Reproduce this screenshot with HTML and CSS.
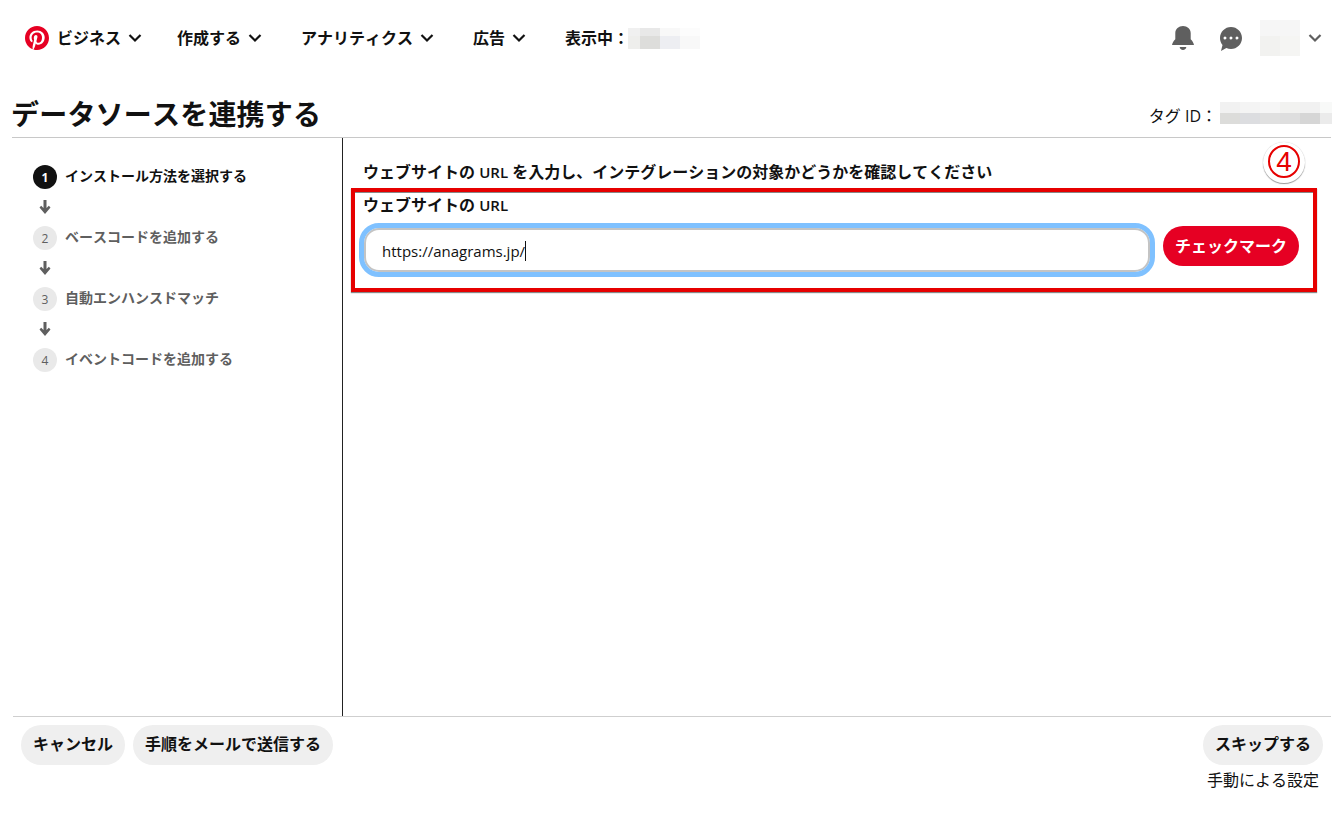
FILE: index.html
```html
<!DOCTYPE html>
<html lang="ja">
<head>
<meta charset="utf-8">
<title>データソースを連携する</title>
<link rel="stylesheet" href="styles.css">
</head>
<body>
<header class="nav">
  <svg class="logo" viewBox="0 0 24 24"><path d="M0 12c0 5.123 3.211 9.497 7.73 11.218-.11-.937-.227-2.482.025-3.566.217-.932 1.401-5.938 1.401-5.938s-.357-.715-.357-1.774c0-1.66.962-2.9 2.161-2.9 1.02 0 1.512.765 1.512 1.682 0 1.025-.653 2.557-.99 3.978-.281 1.189.597 2.159 1.769 2.159 2.123 0 3.756-2.239 3.756-5.471 0-2.861-2.056-4.86-4.991-4.86-3.398 0-5.393 2.549-5.393 5.184 0 1.027.395 2.127.889 2.726a.36.36 0 0 1 .083.343c-.091.378-.293 1.189-.332 1.355-.053.218-.173.265-.4.159-1.492-.694-2.424-2.875-2.424-4.627 0-3.769 2.737-7.229 7.892-7.229 4.144 0 7.365 2.953 7.365 6.899 0 4.117-2.595 7.431-6.199 7.431-1.211 0-2.348-.63-2.738-1.373 0 0-.599 2.282-.744 2.84-.282 1.084-1.064 2.456-1.549 3.235C9.584 23.815 10.77 24 12 24c6.627 0 12-5.373 12-12S18.627 0 12 0 0 5.373 0 12"/></svg>
  <div class="nav-item first">ビジネス<svg class="chev" viewBox="0 0 14 10"><path d="M1.5 2 7 7.5 12.5 2"/></svg></div>
  <div class="nav-item">作成する<svg class="chev" viewBox="0 0 14 10"><path d="M1.5 2 7 7.5 12.5 2"/></svg></div>
  <div class="nav-item">アナリティクス<svg class="chev" viewBox="0 0 14 10"><path d="M1.5 2 7 7.5 12.5 2"/></svg></div>
  <div class="nav-item">広告<svg class="chev" viewBox="0 0 14 10"><path d="M1.5 2 7 7.5 12.5 2"/></svg></div>
  <div class="nav-item viewing">表示中：<span class="blur-view"></span></div>
  <div class="nav-right">
    <svg class="bell" viewBox="2 0 20 24" preserveAspectRatio="none"><path d="M12 24c-1.66 0-3-1.34-3-3h6c0 1.66-1.34 3-3 3zm7-10.83c1.58 1.52 2.67 3.55 3 5.83H2c.33-2.28 1.42-4.31 3-5.83V7c0-3.87 3.13-7 7-7s7 3.13 7 7v6.17z"/></svg>
    <svg class="speech" viewBox="0 0 24 24"><path d="M18 12.5a1.5 1.5 0 1 1 .001-3.001A1.5 1.5 0 0 1 18 12.5m-6 0a1.5 1.5 0 1 1 .001-3.001A1.5 1.5 0 0 1 12 12.5m-6 0a1.5 1.5 0 1 1 .001-3.001A1.5 1.5 0 0 1 6 12.5M12 0C5.925 0 1 4.925 1 11c0 2.653.94 5.086 2.504 6.986L2 24l5.336-3.049A10.93 10.93 0 0 0 12 22c6.075 0 11-4.925 11-11S18.075 0 12 0"/></svg>
    <span class="blur-avatar"></span>
    <svg class="chev chev-grey" viewBox="0 0 14 10"><path d="M1.5 2 7 7.5 12.5 2"/></svg>
  </div>
</header>

<section class="title-row">
  <h1 class="title">データソースを連携する</h1>
  <div class="tag"><span class="tag-text">タグ ID：</span><span class="blur-tag"></span></div>
</section>

<main class="main">
  <aside class="steps">
    <div class="step active"><span class="num">1</span><span class="step-text">インストール方法を選択する</span></div>
    <svg class="arrow" viewBox="0 0 14 14"><path d="M5.5 0h3v8l2.3-2.3 1.7 1.7L7 13.9 1.5 7.4l1.7-1.7L5.5 8z"/></svg>
    <div class="step"><span class="num">2</span><span class="step-text">ベースコードを追加する</span></div>
    <svg class="arrow" viewBox="0 0 14 14"><path d="M5.5 0h3v8l2.3-2.3 1.7 1.7L7 13.9 1.5 7.4l1.7-1.7L5.5 8z"/></svg>
    <div class="step"><span class="num">3</span><span class="step-text">自動エンハンスドマッチ</span></div>
    <svg class="arrow" viewBox="0 0 14 14"><path d="M5.5 0h3v8l2.3-2.3 1.7 1.7L7 13.9 1.5 7.4l1.7-1.7L5.5 8z"/></svg>
    <div class="step"><span class="num">4</span><span class="step-text">イベントコードを追加する</span></div>
  </aside>
  <section class="panel">
    <h2 class="heading">ウェブサイトの <span class="latin">URL</span> を入力し、インテグレーションの対象かどうかを確認してください</h2>
    <div class="highlight">
      <div class="label">ウェブサイトの <span class="latin">URL</span></div>
      <div class="field-row">
        <div class="input"><span class="value">https://anagrams.jp/</span><span class="caret"></span></div>
        <div class="btn-red">チェックマーク</div>
      </div>
    </div>
    <div class="callout"><span class="callout-ring">4</span></div>
  </section>
</main>

<footer class="footer">
  <div class="btn">キャンセル</div>
  <div class="btn">手順をメールで送信する</div>
  <div class="footer-right">
    <div class="btn">スキップする</div>
    <div class="manual">手動による設定</div>
  </div>
</footer>
</body>
</html>
```
FILE: styles.css
```css
* { box-sizing: border-box; }
html, body { margin: 0; padding: 0; }
body {
  width: 1340px;
  height: 816px;
  overflow: hidden;
  background: #fff;
  color: #111;
  font-family: "Open Sans", "Noto Sans CJK JP", sans-serif;
  font-kerning: none;
  display: flex;
  flex-direction: column;
}
.nav {
  height: 76px;
  flex: none;
  display: flex;
  align-items: center;
  padding-left: 25px;
  font-size: 16px;
  font-weight: 700;
}
.logo { width: 24px; height: 24px; fill: #e60023; margin-right: 8px; flex: none; }
.nav-item { display: flex; align-items: center; margin-right: 39px; line-height: 24px; }
.nav-item.first { margin-right: 35px; }
.chev { width: 14px; height: 10px; margin-left: 7px; fill: none; stroke: #111; stroke-width: 2.2; }
.chev-grey { stroke: #5f5f5f; margin-left: 8px; }
.blur-view {
  width: 72px;
  height: 21px;
  margin-left: -1px;
  background:
    linear-gradient(90deg, #f0f0f0 12px, #e8e8e8 12px 32px, #f8f8f8 32px 52px, #fcfcfc 52px) top / 100% 8px no-repeat,
    linear-gradient(90deg, #eeeeec 12px, #dddddb 12px 32px, #edeef2 32px 52px, #f8f8f8 52px) bottom / 100% 13px no-repeat;
}
.nav-right { margin-left: auto; display: flex; align-items: center; padding-right: 18px; }
.bell { width: 22px; height: 24px; fill: #5f5f5f; }
.speech { width: 24px; height: 24px; fill: #5f5f5f; margin-left: 25px; margin-top: 1px; }
.blur-avatar {
  width: 40px;
  height: 36px;
  margin-left: 17px;
  background:
    linear-gradient(#f6f6f6, #f6f6f6) top / 100% 16px no-repeat,
    linear-gradient(90deg, #f2f2f0 20px, #f5f5f3 20px) bottom / 100% 20px no-repeat;
}
.title-row {
  height: 62px;
  flex: none;
  margin: 0 9px 0 12px;
  border-bottom: 1px solid #c8c8c8;
  display: flex;
  justify-content: space-between;
  align-items: flex-end;
}
.title { margin: 0 0 3px -1px; font-size: 28px; line-height: 40px; font-weight: 700; letter-spacing: .2px; color: #111; }
.tag { display: flex; align-items: center; font-size: 16px; line-height: 22px; margin-right: -1px; margin-bottom: 10px; }
.tag-text { margin-top: 6px; }
.blur-tag {
  width: 112px;
  height: 22px;
  margin-left: 3px;
  background:
    linear-gradient(90deg, #f1f1f1 20px, #f4f4f4 20px 40px, #f6f6f6 40px 60px, #f2f2f0 60px 80px, #f1f1f1 80px 100px, #f8f9f8 100px) top / 100% 11px no-repeat,
    linear-gradient(90deg, #dcdcda 20px, #dcdde0 20px 40px, #e0e0e0 40px 60px, #dedede 60px 80px, #d6d6d6 80px 100px, #ebebeb 100px) bottom / 100% 11px no-repeat;
}
.main { height: 578px; flex: none; display: flex; }
.steps {
  width: 343px;
  flex: none;
  border-right: 1px solid #222;
  padding: 27px 0 0 33px;
  display: flex;
  flex-direction: column;
  align-items: flex-start;
}
.step {
  display: flex;
  align-items: center;
  height: 24px;
  font-size: 14px;
  font-weight: 700;
  color: #5f5f5f;
}
.step.active { color: #111; }
.step-text { padding-bottom: 4px; }
.num {
  width: 24px;
  height: 24px;
  margin-right: 8px;
  border-radius: 50%;
  background: #e9e9e9;
  color: #5f5f5f;
  font-size: 12px;
  font-weight: 400;
  display: flex;
  align-items: center;
  justify-content: center;
}
.active .num { background: #111; color: #fff; font-weight: 700; }
.arrow { width: 14px; height: 14px; margin: 11px 0 12px 5px; fill: #5f5f5f; }
.panel { flex: 1; position: relative; padding-top: 22px; }
.heading { margin: 0 0 4px 20px; font-size: 16px; line-height: 24px; font-weight: 700; }
.latin { font-size: 15px; font-weight: 600; line-height: 1; }
.highlight {
  width: 966px;
  height: 104px;
  margin-left: 8px;
  border: 4px solid #e60000;
  box-shadow: 0 1px 1px #888, inset 0 1px 0 #888;
  padding: 1px 0 0 8px;
}
.label { font-size: 16px; line-height: 24px; font-weight: 700; }
.field-row { display: flex; align-items: flex-start; margin: 6px 0 0 -4px; }
.input {
  width: 796px;
  height: 54px;
  border: 5px solid #7fc1ff;
  border-radius: 20px;
  box-shadow: inset 0 0 0 2px #c4c4c4;
  padding: 2px 0 0 18px;
  display: flex;
  align-items: center;
  font-size: 15px;
  color: #111;
}
.caret { width: 1px; height: 20px; background: #111; }
.btn-red {
  width: 136px;
  height: 40px;
  margin: 3px 0 0 8px;
  padding-bottom: 3px;
  border-radius: 20px;
  background: #e60023;
  color: #fff;
  font-size: 16px;
  font-weight: 700;
  display: flex;
  align-items: center;
  justify-content: center;
}
.callout {
  position: absolute;
  left: 920px;
  top: 4px;
  width: 42px;
  height: 41px;
  border-radius: 50%;
  background: #fff;
  box-shadow: 0 1px 1px #999, 0 0 1px #ccc;
  display: flex;
  align-items: flex-start;
  justify-content: center;
  padding-top: 3px;
}
.callout-ring {
  width: 32px;
  height: 33px;
  border: 2px solid #e60000;
  border-radius: 50%;
  color: #e60000;
  font-family: "Liberation Sans", sans-serif;
  font-size: 28px;
  line-height: 29px;
  text-align: center;
}
.footer {
  height: 100px;
  flex: none;
  margin: 0 9px 0 13px;
  border-top: 1px solid #cfcfcf;
  padding: 8px 8px 0;
  display: flex;
  align-items: flex-start;
  gap: 8px;
}
.btn {
  height: 40px;
  padding: 0 12px 4px;
  border-radius: 20px;
  background: #efefef;
  color: #111;
  font-size: 16px;
  font-weight: 700;
  display: flex;
  align-items: center;
}
.footer-right { margin-left: auto; display: flex; flex-direction: column; align-items: flex-end; }
.manual { margin: 3px 4px 0 0; font-size: 16px; line-height: 24px; color: #111; }
```
